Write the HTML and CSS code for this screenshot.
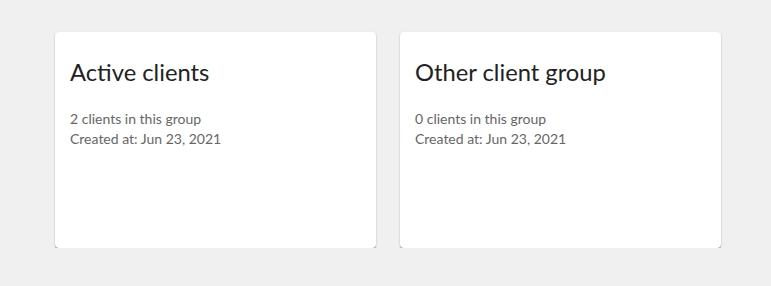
FILE: index.html
```html
<!DOCTYPE html>
<html>
<head>
<meta charset="utf-8">
<link rel="stylesheet" href="styles.css">
</head>
<body>
<main class="groups">
  <section class="card">
    <h2 class="card-title">Active clients</h2>
    <div class="card-meta">
      <p>2 clients in this group</p>
      <p>Created at: Jun 23, 2021</p>
    </div>
  </section>
  <section class="card">
    <h2 class="card-title">Other client group</h2>
    <div class="card-meta">
      <p>0 clients in this group</p>
      <p>Created at: Jun 23, 2021</p>
    </div>
  </section>
</main>
</body>
</html>
```
FILE: styles.css
```css
html, body {
  margin: 0;
  padding: 0;
  background: #f0f0f0;
  font-family: "Lato", "Open Sans", sans-serif;
}
.groups {
  display: grid;
  grid-template-columns: 321px 321px;
  gap: 24px;
  padding: 32px 0 0 55px;
}
.card {
  background: #fff;
  border-radius: 4px;
  height: 216px;
  box-sizing: border-box;
  padding: 25px 15px 16px 15px;
  box-shadow: 0 1px 1px rgba(0,0,0,0.4), 0 1px 3px rgba(0,0,0,0.1);
}
.card-title {
  margin: 0;
  font-size: 23.75px;
  font-weight: 400;
  line-height: 30px;
  color: #222;
}
.card-meta {
  margin-top: 22px;
  font-size: 14px;
  line-height: 20px;
  color: #666;
}
.card-meta p {
  margin: 0;
}
```
